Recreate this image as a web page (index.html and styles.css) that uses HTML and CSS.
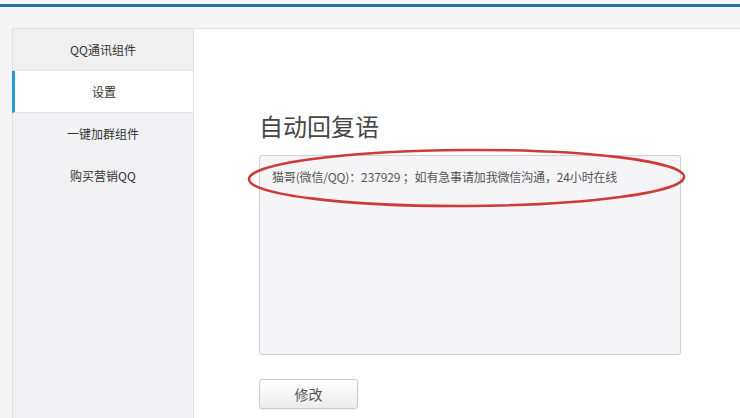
FILE: index.html
```html
<!DOCTYPE html>
<html lang="zh-CN">
<head>
  <meta charset="UTF-8" />
  <meta name="viewport" content="width=device-width, initial-scale=1.0" />
  <title>自动回复语</title>
  <link rel="stylesheet" href="styles.css">
</head>
<body>

  <div class="topbar"></div>

  <div class="main">
    <nav class="sidebar">
      <a class="side-item">QQ通讯组件</a>
      <a class="side-item active">设置</a>
      <a class="side-item">一键加群组件</a>
      <a class="side-item">购买营销QQ</a>
    </nav>

    <div class="content">
      <h2>自动回复语</h2>

      <div class="reply-box">
        <div class="reply-text">猫哥(微信/QQ)：237929 ；如有急事请加我微信沟通，24小时在线</div>
        <!-- 红圈标注 -->
        <svg class="mark" width="441" height="62" viewBox="0 0 441 62">
          <ellipse cx="220.5" cy="31" rx="217.5" ry="28" fill="none" stroke="#cf3a3a" stroke-width="2.6" transform="rotate(-0.3 220.5 31)" />
        </svg>
      </div>

      <button class="btn">修改</button>
    </div>
  </div>

</body>
</html>
```

FILE: styles.css
```css
* {
  margin: 0; padding: 0;
  box-sizing: border-box;
  font-family: "Noto Sans CJK SC", "Liberation Sans", sans-serif;
}

html, body {
  height: 100%;
  overflow: hidden;
}

body {
  background: #f5f5f5;
  color: #333;
}

.topbar {
  height: 7px;
  border-top: 4px solid #f7f7f7;
  background: #2677a6;
}

.main {
  display: flex;
  padding: 21px 0 0 12px;
  height: calc(100% - 7px);
}

.sidebar {
  width: 182px;
  background: #f2f1f3;
  border: 1px solid #e2e2e2;
  border-bottom: none;
  display: flex;
  flex-direction: column;
}

.side-item {
  display: block;
  height: 42px;
  padding-top: 1px;
  line-height: 40px;
  text-align: center;
  font-size: 12px;
  color: #333;
  background: #f2f1f3;
}

.side-item:first-child {
  background: #f0f0f0;
  border-bottom: 1px solid #e4e4e4;
}

.side-item.active {
  background: #fff;
  border-left: 3px solid #2a9ad3;
  margin-left: -1px;
  border-bottom: 1px solid #e4e4e4;
}

.content {
  flex: 1;
  background: #fff;
  border-top: 1px solid #e3e3e3;
  padding: 80px 0 0 65px;
}

.content h2 {
  font-size: 24px;
  font-weight: normal;
  color: #474747;
  line-height: 34px;
  margin-bottom: 12px;
}

.reply-box {
  position: relative;
  width: 422px;
  height: 200px;
  background: #f5f4f6;
  border: 1px solid #cfcfcf;
  border-radius: 3px;
  padding: 12px 12px;
}

.reply-text {
  font-size: 12px;
  line-height: 18px;
  letter-spacing: -0.15px;
  color: #555;
}

.mark {
  position: absolute;
  left: -14px;
  top: -9px;
}

.btn {
  display: block;
  margin-top: 24px;
  width: 99px;
  height: 30px;
  border: 1px solid #cacaca;
  border-radius: 3px;
  background: linear-gradient(#ffffff, #ececec);
  box-shadow: 0 1px 1px rgba(0,0,0,0.06);
  font-size: 14px;
  color: #555;
  cursor: pointer;
}
```
